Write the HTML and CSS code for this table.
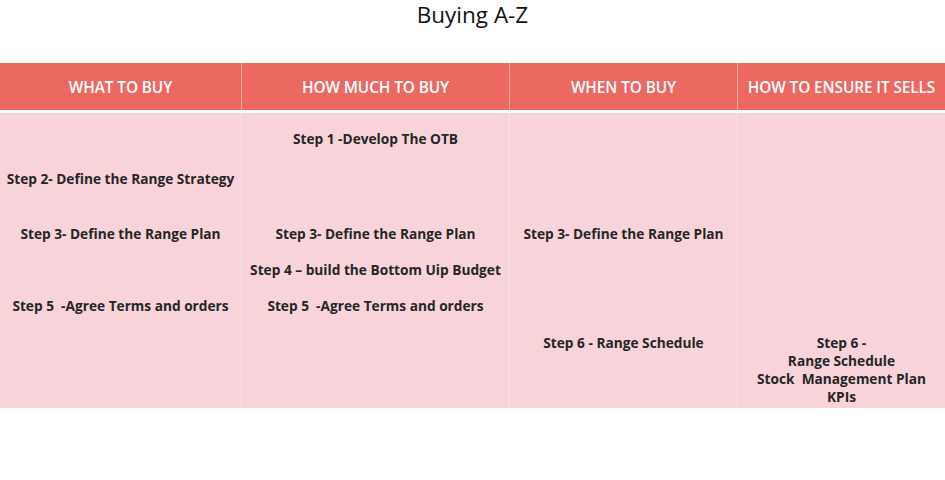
FILE: index.html
```html
<!DOCTYPE html>
<html>
<head>
<meta charset="utf-8">
<link rel="stylesheet" href="styles.css">
</head>
<body>
<h1 class="title">Buying A-Z</h1>
<div class="table">
  <div class="head">
    <div class="hcell">WHAT TO BUY</div>
    <div class="hcell">HOW MUCH TO BUY</div>
    <div class="hcell">WHEN TO BUY</div>
    <div class="hcell">HOW TO ENSURE IT SELLS</div>
  </div>
  <div class="rows">
    <div class="col">
      <div class="item r2">Step 2- Define the Range Strategy</div>
      <div class="item r3">Step 3- Define the Range Plan</div>
      <div class="item r5">Step 5&nbsp; -Agree Terms and orders</div>
    </div>
    <div class="col">
      <div class="item r1">Step 1 -Develop The OTB</div>
      <div class="item r3">Step 3- Define the Range Plan</div>
      <div class="item r4">Step 4 – build the Bottom Uip Budget</div>
      <div class="item r5">Step 5&nbsp; -Agree Terms and orders</div>
    </div>
    <div class="col">
      <div class="item r3">Step 3- Define the Range Plan</div>
      <div class="item r6">Step 6 - Range Schedule</div>
    </div>
    <div class="col">
      <div class="item r6">Step 6 -<br>Range Schedule<br>Stock&nbsp; Management Plan<br>KPIs</div>
    </div>
  </div>
</div>
</body>
</html>
```
FILE: styles.css
```css
html, body {
  margin: 0;
  padding: 0;
  background: #ffffff;
}
body {
  width: 945px;
  height: 480px;
  font-family: "Open Sans", "Liberation Sans", sans-serif;
}
.title {
  margin: 0;
  height: 63px;
  padding-top: 0;
  box-sizing: border-box;
  text-align: center;
  font-size: 22.5px;
  font-weight: 400;
  line-height: 30px;
  color: #111111;
}
.table {
  display: flex;
  flex-direction: column;
  gap: 3px;
}
.head {
  display: grid;
  grid-template-columns: 241px 268px 228px 208px;
  height: 47px;
  background: #ec6962;
}
.hcell {
  display: flex;
  align-items: center;
  justify-content: center;
  padding-top: 2px;
  color: #ffffff;
  font-size: 15.4px;
  font-weight: 600;
  letter-spacing: -0.1px;
  border-left: 1px solid #f5aaa6;
  white-space: nowrap;
}
.hcell:first-child {
  border-left: none;
}
.rows {
  display: grid;
  grid-template-columns: 241px 268px 228px 208px;
  height: 295px;
  background: #f8d3da;
}
.col {
  display: grid;
  grid-template-rows: 17px 18px 22px 18px 37px 18px 18px 18px 18px 18px 19px 72px 1fr;
  border-left: 1px solid #fbe4e8;
}
.col:first-child {
  border-left: none;
}
.item {
  text-align: center;
  font-size: 13.7px;
  font-weight: 700;
  line-height: 18px;
  color: #262626;
  white-space: nowrap;
}
.r1 { grid-row: 2; }
.r2 { grid-row: 4; }
.r3 { grid-row: 6; }
.r4 { grid-row: 8; }
.r5 { grid-row: 10; }
.r6 { grid-row: 12; }
```
